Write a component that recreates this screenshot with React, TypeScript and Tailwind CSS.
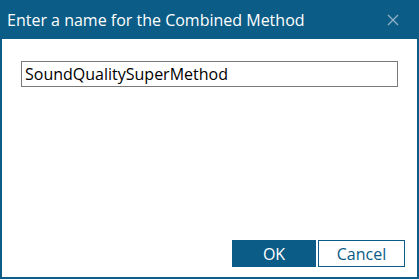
import React, { useState } from 'react';

const App: React.FC = () => {
  const [name, setName] = useState('SoundQualitySuperMethod');

  return (
    <div className="w-[419px] h-[280px] bg-white" style={{ fontFamily: '"Open Sans", "Noto Sans", sans-serif' }}>
      <div className="flex flex-col h-[279px] w-[419px] border-2 border-t-0 border-[#0b5c86] bg-white">
        {/* Title bar */}
        <div className="flex items-center justify-between h-[39px] bg-[#0b5c86] pl-[7px] pr-[20px] -mx-[2px]">
          <span className="text-[16px] text-white">Enter a name for the Combined Method</span>
          <svg width="12" height="12" viewBox="0 0 12 12" className="text-[#8fb1c6]">
            <path d="M1 1 L11 11 M11 1 L1 11" stroke="currentColor" strokeWidth="1.4" />
          </svg>
        </div>

        <div className="flex flex-col flex-1 px-[19px] pt-[22px] pb-[10px]">
          <input
            autoFocus
            value={name}
            onChange={(e) => setName(e.target.value)}
            onFocus={(e) => e.currentTarget.setSelectionRange(name.length, name.length)}
            className="h-[26px] w-full border border-[#7a7a7a] px-[3px] text-[16px] text-black outline-none caret-black"
          />

          <div className="flex-1" />

          <div className="flex justify-end gap-[2px] -mr-[7px]">
            <button className="w-[84px] h-[27px] bg-[#0b5c86] text-white text-[16px]">OK</button>
            <button className="w-[87px] h-[27px] border border-[#0b5c86] bg-white text-[#0b5c86] text-[16px]">Cancel</button>
          </div>
        </div>
      </div>
    </div>
  );
};

export default App;
